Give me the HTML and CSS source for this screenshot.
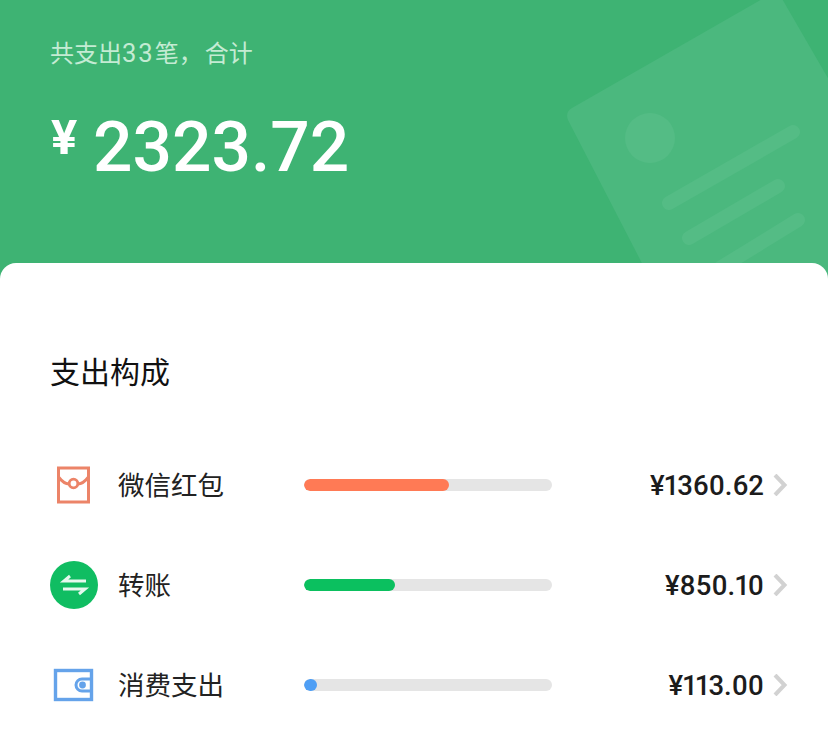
FILE: index.html
```html
<!DOCTYPE html>
<html lang="zh-CN">
<head>
    <meta charset="UTF-8">
    <meta name="viewport" content="width=device-width, initial-scale=1.0">
    <title>支出构成</title>
    <link rel="stylesheet" href="styles.css">
</head>
<body>
    <!-- 顶部汇总 -->
    <header class="summary">
        <svg class="summary-deco" width="828" height="279" viewBox="0 0 828 279">
            <path class="deco-sheet" d="M572 108 L771 -6 Q777 -9 781 -3 L880 168 L880 300 L661 300 L568 120 Q565 112 572 108 Z"/>
            <circle class="deco-mark" cx="650" cy="138" r="25"/>
            <path class="deco-line" d="M669 203 L793 132"/>
            <path class="deco-line" d="M689 238 L778 186"/>
            <path class="deco-line" d="M720 268 L798 220"/>
        </svg>
        <p class="summary-label">共支出<span class="summary-count">33</span>笔<span class="summary-comma">，</span>合计</p>
        <div class="summary-total">
            <span class="summary-currency">¥</span>
            <span class="summary-amount">2323.72</span>
        </div>
    </header>

    <main class="card">
        <h2 class="card-title">支出构成</h2>

        <div class="row">
            <div class="row-icon">
                <svg width="50" height="50" viewBox="0 0 50 50">
                    <rect x="9.5" y="8" width="30" height="34" fill="none" stroke="#ec8468" stroke-width="3"/>
                    <path d="M9.5 17 Q15 24 20 24 M29 24 Q34 24 39.5 17" fill="none" stroke="#ec8468" stroke-width="3"/>
                    <circle cx="24.5" cy="23.5" r="4.3" fill="none" stroke="#ec8468" stroke-width="2.8"/>
                </svg>
            </div>
            <span class="row-name">微信红包</span>
            <div class="bar"><div class="bar-fill bar-red" style="width: 145px"></div></div>
            <span class="row-amount">¥1360.62</span>
            <svg class="row-arrow" width="16" height="22" viewBox="0 0 16 22"><path d="M3 1 L12.5 11 L3 21" fill="none" stroke="#d2d2d2" stroke-width="4"/></svg>
        </div>

        <div class="row">
            <div class="row-icon">
                <svg width="50" height="50" viewBox="0 0 50 50">
                    <circle cx="25" cy="25" r="24" fill="#10bd62"/>
                    <path d="M37 21 H15 L21 16" fill="none" stroke="#e6f8ee" stroke-width="3"/>
                    <path d="M14 29 H36 L30 34" fill="none" stroke="#e6f8ee" stroke-width="3"/>
                </svg>
            </div>
            <span class="row-name">转账</span>
            <div class="bar"><div class="bar-fill bar-green" style="width: 91px"></div></div>
            <span class="row-amount">¥850.10</span>
            <svg class="row-arrow" width="16" height="22" viewBox="0 0 16 22"><path d="M3 1 L12.5 11 L3 21" fill="none" stroke="#d2d2d2" stroke-width="4"/></svg>
        </div>

        <div class="row">
            <div class="row-icon">
                <svg width="50" height="50" viewBox="0 0 50 50">
                    <rect x="6.5" y="10.5" width="36" height="29" fill="none" stroke="#65a3ea" stroke-width="3.4"/>
                    <path d="M42 19 H33 A6 6 0 0 0 33 31 H42" fill="none" stroke="#65a3ea" stroke-width="3"/>
                    <circle cx="33.5" cy="25" r="3.4" fill="#65a3ea"/>
                </svg>
            </div>
            <span class="row-name">消费支出</span>
            <div class="bar"><div class="bar-fill bar-blue" style="width: 13px"></div></div>
            <span class="row-amount">¥113.00</span>
            <svg class="row-arrow" width="16" height="22" viewBox="0 0 16 22"><path d="M3 1 L12.5 11 L3 21" fill="none" stroke="#d2d2d2" stroke-width="4"/></svg>
        </div>
    </main>
</body>
</html>
```

FILE: styles.css
```css
* {
    margin: 0;
    padding: 0;
    box-sizing: border-box;
}

body {
    font-family: Roboto, "Noto Sans CJK SC", sans-serif;
    background-color: #fff;
    color: #1c1c1c;
    height: 734px;
    overflow: hidden;
}

.summary {
    position: relative;
    height: 279px;
    padding: 36px 50px 0;
    background-color: #3eb373;
    overflow: hidden;
}

.summary-deco {
    position: absolute;
    top: 0;
    left: 0;
}

.deco-sheet {
    fill: #4bb87e;
}

.deco-mark {
    fill: #54bc85;
}

.deco-line {
    fill: none;
    stroke: #54bc85;
    stroke-width: 14;
    stroke-linecap: round;
}

.summary-label {
    position: relative;
    font-size: 24px;
    line-height: 34px;
    color: #c4ebd3;
}

.summary-count {
    font-size: 25.5px;
    letter-spacing: 2px;
}

.summary-comma {
    letter-spacing: 2px;
}

.summary-total {
    position: relative;
    display: flex;
    align-items: flex-start;
    gap: 14px;
    margin-top: 35px;
    padding-left: 1px;
    color: #fff;
}

.summary-currency {
    width: 28px;
    font-size: 49px;
    font-weight: 700;
    line-height: 48px;
    margin-top: 8px;
}

.summary-amount {
    font-size: 69.5px;
    font-weight: 500;
    line-height: 84px;
}

.card {
    position: relative;
    height: 471px;
    margin-top: -16px;
    padding: 0 40px 0 50px;
    background-color: #fff;
    border-radius: 16px 16px 0 0;
}

.card-title {
    padding-top: 88px;
    height: 172px;
    font-size: 30px;
    line-height: 44px;
    font-weight: 400;
    color: #111;
}

.row {
    display: flex;
    align-items: center;
    height: 100px;
}

.row-icon {
    width: 50px;
    height: 50px;
    margin-left: -1px;
    flex-shrink: 0;
}

.row-name {
    width: 205px;
    padding-left: 19px;
    padding-bottom: 3px;
    font-size: 26.5px;
    color: #222;
}

.bar {
    width: 248px;
    height: 12px;
    flex-shrink: 0;
    background-color: #e5e5e5;
    border-radius: 6px;
    overflow: hidden;
}

.bar-fill {
    height: 100%;
    border-radius: 6px;
}

.bar-red {
    background-color: #ff7a55;
}

.bar-green {
    background-color: #0bc05f;
}

.bar-blue {
    background-color: #4f9ff5;
}

.row-amount {
    flex: 1;
    text-align: right;
    font-size: 27.5px;
    font-weight: 500;
    font-variant-numeric: proportional-nums;
}

.row-arrow {
    margin-left: 8px;
    flex-shrink: 0;
}
```
